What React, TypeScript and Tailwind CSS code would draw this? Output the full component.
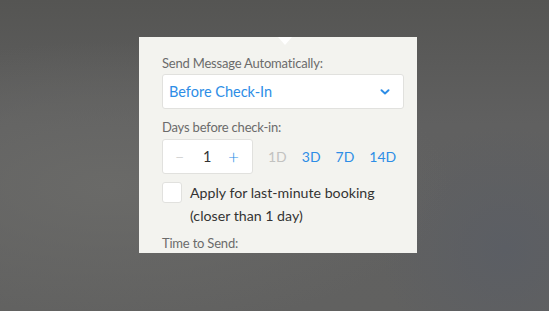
import React, { useState } from 'react'

const presets = [
  { label: '1D', days: 1 },
  { label: '3D', days: 3 },
  { label: '7D', days: 7 },
  { label: '14D', days: 14 },
]

function Chevron(): React.JSX.Element {
  return (
    <svg width="10" height="6" viewBox="0 0 10 6" fill="none">
      <path d="M1.5 1.2 5 4.5l3.5-3.3" stroke="#2d8de6" strokeWidth="1.9" strokeLinecap="round" strokeLinejoin="round" />
    </svg>
  )
}

export default function App(): React.JSX.Element {
  const [days, setDays] = useState(1)
  const [lastMinute, setLastMinute] = useState(false)

  return (
    <div
      className="relative h-[311px] w-full overflow-hidden bg-[#5e5e5c] bg-[radial-gradient(ellipse_at_20%_60%,#6a6a68_0%,transparent_55%),radial-gradient(circle_at_92%_80%,#5b5e64_0%,transparent_22%),linear-gradient(180deg,#555553_0%,#606060_40%,#616160_100%)] pt-[37px] pl-[139px]"
      style={{ fontFamily: 'Lato, "Liberation Sans", sans-serif' }}
    >
      <div className="relative h-[216px] w-[278px] overflow-hidden bg-[#f3f3ef] pl-[23px] pt-[16px]">
        {/* popover arrow */}
        <div className="absolute left-[139px] top-0 h-0 w-0 border-x-[7px] border-t-[8px] border-x-transparent border-t-white" />

        <div className="text-[13px] leading-[20px] tracking-[-0.2px] text-[#6b6b6b]">Send Message Automatically:</div>
        <button
          type="button"
          className="mt-[1px] flex h-[35px] w-[242px] items-center justify-between rounded-[3px] border border-[#e1e1de] bg-white pl-[6px] pr-[13px] text-[14.5px] text-[#2d8de6]"
        >
          <span>Before Check-In</span>
          <Chevron />
        </button>

        <div className="mt-[8px] text-[13px] leading-[20px] tracking-[-0.2px] text-[#6b6b6b]">Days before check-in:</div>
        <div className="mt-[2px] flex items-center gap-[15px]">
          <div className="flex h-[35px] w-[91px] items-center justify-between rounded-[3px] border border-[#e1e1de] bg-white pl-[12px] pr-[13px]">
            <button type="button" className="text-[16px] font-light leading-none text-[#c0c0c0]" onClick={() => setDays((d) => Math.max(1, d - 1))}>
              −
            </button>
            <span className="pl-[2px] text-[14.5px] text-[#333]">{days}</span>
            <button type="button" className="text-[19px] font-light leading-none text-[#2d8de6]" onClick={() => setDays((d) => d + 1)}>
              +
            </button>
          </div>
          {presets.map((p) => (
            <button
              key={p.label}
              type="button"
              className={p.days === days ? 'text-[14px] text-[#c2c2c0]' : 'text-[14px] text-[#2d8de6]'}
              onClick={() => setDays(p.days)}
            >
              {p.label}
            </button>
          ))}
        </div>

        <label className="mt-[7px] flex items-start gap-[8px]">
          <input
            type="checkbox"
            className="mt-[1px] h-[21px] w-[20px] shrink-0 appearance-none rounded-[3px] border border-[#e1e1de] bg-white"
            checked={lastMinute}
            onChange={(e) => setLastMinute(e.target.checked)}
          />
          <span className="text-[14.2px] leading-[23px] text-[#333]">
            Apply for last-minute booking
            <br />
            (closer than 1 day)
          </span>
        </label>

        <div className="mt-[6px] text-[13px] leading-[20px] tracking-[-0.2px] text-[#6b6b6b]">Time to Send:</div>
      </div>
    </div>
  )
}
